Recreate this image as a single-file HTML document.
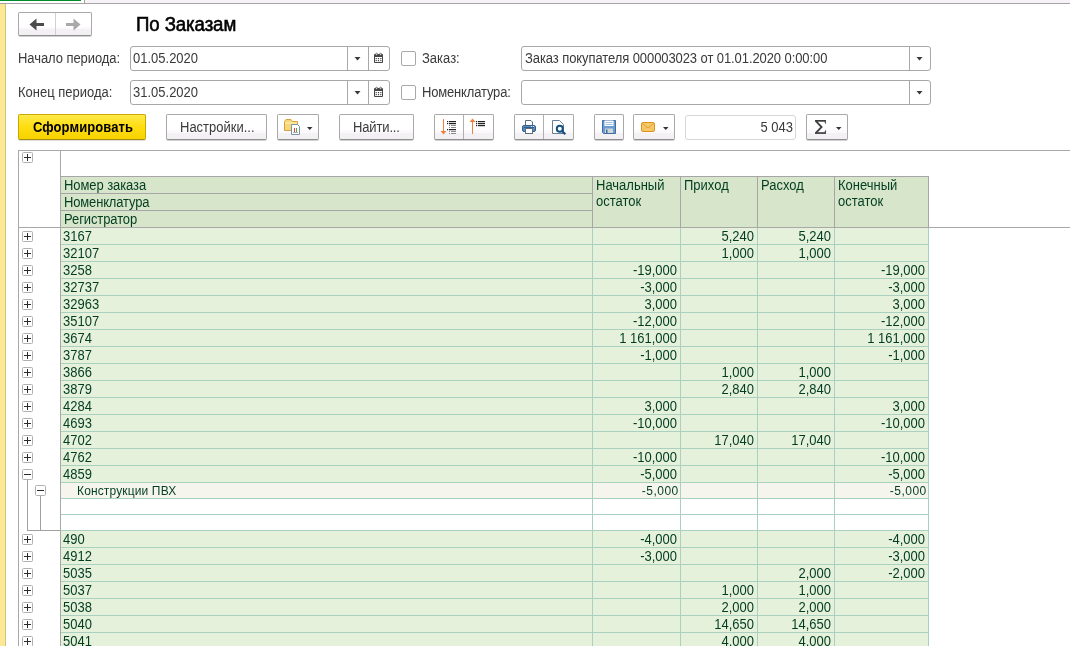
<!DOCTYPE html>
<html><head><meta charset="utf-8">
<style>
*{box-sizing:border-box;margin:0;padding:0}
html,body{width:1070px;height:646px;overflow:hidden;background:#fff}
.lbl,.dt,.ht{will-change:transform}
body{position:relative;font-family:"Liberation Sans",sans-serif;font-size:13px;color:#3a3a3a}
.a{position:absolute}
.btn{position:absolute;border:1px solid #a9a9a9;border-bottom-color:#8e8e8e;border-radius:2px;background:linear-gradient(#fff 0%,#fff 62%,#fbf9fb 62%,#fbf9fb 74%,#f3f1f4 74%,#f3f1f4 100%);box-shadow:0 1px 0 rgba(0,0,0,0.18)}
.inp{position:absolute;border:1px solid #a8a8a8;border-radius:3px;background:#fff}
.lbl{position:absolute;white-space:nowrap;line-height:17px;transform:scaleY(1.1);transform-origin:0 13px}
.tri{position:absolute;width:0;height:0;border-left:3.5px solid transparent;border-right:3.5px solid transparent;border-top:4px solid #3c3c3c}
.tb{position:absolute;width:11px;height:11px;border:1px solid #b0b0b0;border-radius:1.5px;background:#fff}
.dt{position:absolute;white-space:nowrap;line-height:17px;color:#023d20;transform:scaleY(1.1);transform-origin:0 13px}
.dr{text-align:right}
.ht{position:absolute;white-space:nowrap;line-height:17px;color:#023d20;transform:scaleY(1.1);transform-origin:0 13px}
.cb{position:absolute;width:15px;height:15px;border:1px solid #a9a9a9;border-radius:2px;background:#fff}
</style></head>
<body>
<!-- top strip -->
<div class="a" style="left:0;top:0;width:81px;height:1px;background:#008a2e"></div>
<div class="a" style="left:85px;top:0;width:985px;height:3px;background:#f6f2f6"></div>
<div class="a" style="left:84px;top:0;width:1px;height:3px;background:#a6a3a8"></div>
<div class="a" style="left:0;top:3px;width:1070px;height:1px;background:#a6a3a8"></div>
<div class="a" style="left:0;top:4px;width:5px;height:642px;background:#fde995"></div>
<div class="a" style="left:5px;top:4px;width:1px;height:642px;background:#d4c27e"></div>

<!-- nav -->
<div class="btn" style="left:18px;top:12px;width:74px;height:24px"></div>
<div class="a" style="left:55px;top:13px;width:1px;height:22px;background:#d0d0d0"></div>

<div class="a" style="left:136px;top:12px;font-size:18.67px;line-height:25px;color:#000;white-space:nowrap;-webkit-text-stroke:0.55px #000;letter-spacing:-0.1px;transform:scaleY(1.07);transform-origin:0 19px;will-change:transform">По Заказам</div>

<!-- row 1 -->
<div class="lbl" style="left:18px;top:50px;letter-spacing:-0.07px">Начало периода:</div>
<div class="inp" style="left:130px;top:46px;width:260px;height:25px"></div>
<div class="lbl" style="left:133px;top:50px">01.05.2020</div>


<div class="lbl" style="left:18px;top:84px">Конец периода:</div>
<div class="inp" style="left:130px;top:80px;width:260px;height:25px"></div>
<div class="lbl" style="left:133px;top:84px">31.05.2020</div>

<div class="cb" style="left:401px;top:51px"></div>
<div class="lbl" style="left:422px;top:50px">Заказ:</div>
<div class="cb" style="left:401px;top:85px"></div>
<div class="lbl" style="left:422px;top:84px;letter-spacing:-0.17px">Номенклатура:</div>

<div class="inp" style="left:521px;top:46px;width:410px;height:25px"></div>
<div class="lbl" style="left:525px;top:50px;letter-spacing:-0.085px">Заказ покупателя 000003023 от 01.01.2020 0:00:00</div>
<div class="inp" style="left:521px;top:80px;width:410px;height:25px"></div>

<div class="a" style="left:347px;top:47px;width:1px;height:23px;background:#a8a8a8"></div>
<div class="a" style="left:368px;top:47px;width:1px;height:23px;background:#a8a8a8"></div>
<div class="a" style="left:347px;top:81px;width:1px;height:23px;background:#a8a8a8"></div>
<div class="a" style="left:368px;top:81px;width:1px;height:23px;background:#a8a8a8"></div>
<div class="a" style="left:909px;top:47px;width:1px;height:23px;background:#a8a8a8"></div>
<div class="a" style="left:909px;top:81px;width:1px;height:23px;background:#a8a8a8"></div>
<!-- buttons -->
<div class="a" style="left:18px;top:114px;width:128px;height:26px;border:1px solid #c9a900;border-bottom-color:#a58c0c;border-radius:2px;background:linear-gradient(#ffe94a,#ffdd10 50%,#f7d200);box-shadow:0 1px 0 rgba(0,0,0,0.12)"></div>
<div class="lbl" style="left:32.5px;top:119px;font-weight:bold;color:#000;letter-spacing:0.08px">Сформировать</div>

<div class="btn" style="left:166px;top:114px;width:101px;height:26px"></div>
<div class="lbl" style="left:180px;top:119px">Настройки...</div>
<div class="btn" style="left:277px;top:114px;width:42px;height:26px"></div>
<div class="btn" style="left:339px;top:114px;width:75px;height:26px"></div>
<div class="lbl" style="left:353px;top:119px;letter-spacing:-0.14px">Найти...</div>
<div class="btn" style="left:434px;top:114px;width:60px;height:26px"></div>
<div class="btn" style="left:514px;top:114px;width:60px;height:26px"></div>
<div class="a" style="left:463px;top:115px;width:1px;height:24px;background:#b0b0b0"></div>
<div class="a" style="left:543px;top:115px;width:1px;height:24px;background:#b0b0b0"></div>
<div class="btn" style="left:594px;top:114px;width:30px;height:26px"></div>
<div class="btn" style="left:633px;top:114px;width:42px;height:26px"></div>
<div class="inp" style="left:685px;top:115px;width:111px;height:25px;border-color:#d6d6d6"></div>
<div class="lbl" style="left:700px;top:119px;width:93px;text-align:right">5 043</div>
<div class="btn" style="left:806px;top:114px;width:42px;height:26px"></div>

<!-- table -->
<div class="a" style="left:18px;top:150px;width:1052px;height:1px;background:#a8a8a8"></div>
<div class="a" style="left:18px;top:150px;width:1px;height:496px;background:#a8a8a8"></div>
<div class="a" style="left:60px;top:150px;width:1px;height:496px;background:#a8a8a8"></div>
<div class="a" style="left:18px;top:227px;width:1052px;height:1px;background:#a8a8a8"></div>

<div class="a" style="left:61px;top:228px;width:867px;height:16px;background:#e6f1dc"></div>
<div class="a" style="left:61px;top:244px;width:867px;height:1px;background:#aad0bf"></div>
<div class="dt" style="left:63px;top:228px">3167</div>
<div class="dt dr" style="left:680px;width:74px;top:228px">5,240</div>
<div class="dt dr" style="left:757px;width:74px;top:228px">5,240</div>
<div class="a" style="left:61px;top:245px;width:867px;height:16px;background:#e6f1dc"></div>
<div class="a" style="left:61px;top:261px;width:867px;height:1px;background:#aad0bf"></div>
<div class="dt" style="left:63px;top:245px">32107</div>
<div class="dt dr" style="left:680px;width:74px;top:245px">1,000</div>
<div class="dt dr" style="left:757px;width:74px;top:245px">1,000</div>
<div class="a" style="left:61px;top:262px;width:867px;height:16px;background:#e6f1dc"></div>
<div class="a" style="left:61px;top:278px;width:867px;height:1px;background:#aad0bf"></div>
<div class="dt" style="left:63px;top:262px">3258</div>
<div class="dt dr" style="left:592px;width:85px;top:262px">-19,000</div>
<div class="dt dr" style="left:834px;width:91px;top:262px">-19,000</div>
<div class="a" style="left:61px;top:279px;width:867px;height:16px;background:#e6f1dc"></div>
<div class="a" style="left:61px;top:295px;width:867px;height:1px;background:#aad0bf"></div>
<div class="dt" style="left:63px;top:279px">32737</div>
<div class="dt dr" style="left:592px;width:85px;top:279px">-3,000</div>
<div class="dt dr" style="left:834px;width:91px;top:279px">-3,000</div>
<div class="a" style="left:61px;top:296px;width:867px;height:16px;background:#e6f1dc"></div>
<div class="a" style="left:61px;top:312px;width:867px;height:1px;background:#aad0bf"></div>
<div class="dt" style="left:63px;top:296px">32963</div>
<div class="dt dr" style="left:592px;width:85px;top:296px">3,000</div>
<div class="dt dr" style="left:834px;width:91px;top:296px">3,000</div>
<div class="a" style="left:61px;top:313px;width:867px;height:16px;background:#e6f1dc"></div>
<div class="a" style="left:61px;top:329px;width:867px;height:1px;background:#aad0bf"></div>
<div class="dt" style="left:63px;top:313px">35107</div>
<div class="dt dr" style="left:592px;width:85px;top:313px">-12,000</div>
<div class="dt dr" style="left:834px;width:91px;top:313px">-12,000</div>
<div class="a" style="left:61px;top:330px;width:867px;height:16px;background:#e6f1dc"></div>
<div class="a" style="left:61px;top:346px;width:867px;height:1px;background:#aad0bf"></div>
<div class="dt" style="left:63px;top:330px">3674</div>
<div class="dt dr" style="left:592px;width:85px;top:330px">1 161,000</div>
<div class="dt dr" style="left:834px;width:91px;top:330px">1 161,000</div>
<div class="a" style="left:61px;top:347px;width:867px;height:16px;background:#e6f1dc"></div>
<div class="a" style="left:61px;top:363px;width:867px;height:1px;background:#aad0bf"></div>
<div class="dt" style="left:63px;top:347px">3787</div>
<div class="dt dr" style="left:592px;width:85px;top:347px">-1,000</div>
<div class="dt dr" style="left:834px;width:91px;top:347px">-1,000</div>
<div class="a" style="left:61px;top:364px;width:867px;height:16px;background:#e6f1dc"></div>
<div class="a" style="left:61px;top:380px;width:867px;height:1px;background:#aad0bf"></div>
<div class="dt" style="left:63px;top:364px">3866</div>
<div class="dt dr" style="left:680px;width:74px;top:364px">1,000</div>
<div class="dt dr" style="left:757px;width:74px;top:364px">1,000</div>
<div class="a" style="left:61px;top:381px;width:867px;height:16px;background:#e6f1dc"></div>
<div class="a" style="left:61px;top:397px;width:867px;height:1px;background:#aad0bf"></div>
<div class="dt" style="left:63px;top:381px">3879</div>
<div class="dt dr" style="left:680px;width:74px;top:381px">2,840</div>
<div class="dt dr" style="left:757px;width:74px;top:381px">2,840</div>
<div class="a" style="left:61px;top:398px;width:867px;height:16px;background:#e6f1dc"></div>
<div class="a" style="left:61px;top:414px;width:867px;height:1px;background:#aad0bf"></div>
<div class="dt" style="left:63px;top:398px">4284</div>
<div class="dt dr" style="left:592px;width:85px;top:398px">3,000</div>
<div class="dt dr" style="left:834px;width:91px;top:398px">3,000</div>
<div class="a" style="left:61px;top:415px;width:867px;height:16px;background:#e6f1dc"></div>
<div class="a" style="left:61px;top:431px;width:867px;height:1px;background:#aad0bf"></div>
<div class="dt" style="left:63px;top:415px">4693</div>
<div class="dt dr" style="left:592px;width:85px;top:415px">-10,000</div>
<div class="dt dr" style="left:834px;width:91px;top:415px">-10,000</div>
<div class="a" style="left:61px;top:432px;width:867px;height:16px;background:#e6f1dc"></div>
<div class="a" style="left:61px;top:448px;width:867px;height:1px;background:#aad0bf"></div>
<div class="dt" style="left:63px;top:432px">4702</div>
<div class="dt dr" style="left:680px;width:74px;top:432px">17,040</div>
<div class="dt dr" style="left:757px;width:74px;top:432px">17,040</div>
<div class="a" style="left:61px;top:449px;width:867px;height:16px;background:#e6f1dc"></div>
<div class="a" style="left:61px;top:465px;width:867px;height:1px;background:#aad0bf"></div>
<div class="dt" style="left:63px;top:449px">4762</div>
<div class="dt dr" style="left:592px;width:85px;top:449px">-10,000</div>
<div class="dt dr" style="left:834px;width:91px;top:449px">-10,000</div>
<div class="a" style="left:61px;top:466px;width:867px;height:16px;background:#e6f1dc"></div>
<div class="a" style="left:61px;top:482px;width:867px;height:1px;background:#aad0bf"></div>
<div class="dt" style="left:63px;top:466px">4859</div>
<div class="dt dr" style="left:592px;width:85px;top:466px">-5,000</div>
<div class="dt dr" style="left:834px;width:91px;top:466px">-5,000</div>
<div class="a" style="left:61px;top:483px;width:867px;height:15px;background:#f5f5ee"></div>
<div class="a" style="left:61px;top:498px;width:867px;height:1px;background:#aad0bf"></div>
<div class="dt" style="left:77px;top:483px;font-size:12px;transform:none;letter-spacing:0.14px">Конструкции ПВХ</div>
<div class="dt dr" style="left:592px;width:86.8px;top:483px;font-size:12px;transform:none;letter-spacing:0.5px">-5,000</div>
<div class="dt dr" style="left:834px;width:92.8px;top:483px;font-size:12px;transform:none;letter-spacing:0.5px">-5,000</div>
<div class="a" style="left:61px;top:499px;width:867px;height:15px;background:#ffffff"></div>
<div class="a" style="left:61px;top:514px;width:867px;height:1px;background:#aad0bf"></div>
<div class="a" style="left:61px;top:515px;width:867px;height:15px;background:#ffffff"></div>
<div class="a" style="left:61px;top:530px;width:867px;height:1px;background:#aad0bf"></div>
<div class="a" style="left:61px;top:531px;width:867px;height:16px;background:#e6f1dc"></div>
<div class="a" style="left:61px;top:547px;width:867px;height:1px;background:#aad0bf"></div>
<div class="dt" style="left:63px;top:531px">490</div>
<div class="dt dr" style="left:592px;width:85px;top:531px">-4,000</div>
<div class="dt dr" style="left:834px;width:91px;top:531px">-4,000</div>
<div class="a" style="left:61px;top:548px;width:867px;height:16px;background:#e6f1dc"></div>
<div class="a" style="left:61px;top:564px;width:867px;height:1px;background:#aad0bf"></div>
<div class="dt" style="left:63px;top:548px">4912</div>
<div class="dt dr" style="left:592px;width:85px;top:548px">-3,000</div>
<div class="dt dr" style="left:834px;width:91px;top:548px">-3,000</div>
<div class="a" style="left:61px;top:565px;width:867px;height:16px;background:#e6f1dc"></div>
<div class="a" style="left:61px;top:581px;width:867px;height:1px;background:#aad0bf"></div>
<div class="dt" style="left:63px;top:565px">5035</div>
<div class="dt dr" style="left:757px;width:74px;top:565px">2,000</div>
<div class="dt dr" style="left:834px;width:91px;top:565px">-2,000</div>
<div class="a" style="left:61px;top:582px;width:867px;height:16px;background:#e6f1dc"></div>
<div class="a" style="left:61px;top:598px;width:867px;height:1px;background:#aad0bf"></div>
<div class="dt" style="left:63px;top:582px">5037</div>
<div class="dt dr" style="left:680px;width:74px;top:582px">1,000</div>
<div class="dt dr" style="left:757px;width:74px;top:582px">1,000</div>
<div class="a" style="left:61px;top:599px;width:867px;height:16px;background:#e6f1dc"></div>
<div class="a" style="left:61px;top:615px;width:867px;height:1px;background:#aad0bf"></div>
<div class="dt" style="left:63px;top:599px">5038</div>
<div class="dt dr" style="left:680px;width:74px;top:599px">2,000</div>
<div class="dt dr" style="left:757px;width:74px;top:599px">2,000</div>
<div class="a" style="left:61px;top:616px;width:867px;height:16px;background:#e6f1dc"></div>
<div class="a" style="left:61px;top:632px;width:867px;height:1px;background:#aad0bf"></div>
<div class="dt" style="left:63px;top:616px">5040</div>
<div class="dt dr" style="left:680px;width:74px;top:616px">14,650</div>
<div class="dt dr" style="left:757px;width:74px;top:616px">14,650</div>
<div class="a" style="left:61px;top:633px;width:867px;height:16px;background:#e6f1dc"></div>
<div class="a" style="left:61px;top:649px;width:867px;height:1px;background:#aad0bf"></div>
<div class="dt" style="left:63px;top:633px">5041</div>
<div class="dt dr" style="left:680px;width:74px;top:633px">4,000</div>
<div class="dt dr" style="left:757px;width:74px;top:633px">4,000</div>
<div class="a" style="left:592px;top:228px;width:1px;height:418px;background:#aad0bf"></div>
<div class="a" style="left:680px;top:228px;width:1px;height:418px;background:#aad0bf"></div>
<div class="a" style="left:757px;top:228px;width:1px;height:418px;background:#aad0bf"></div>
<div class="a" style="left:834px;top:228px;width:1px;height:418px;background:#aad0bf"></div>
<div class="a" style="left:928px;top:228px;width:1px;height:418px;background:#aad0bf"></div>
<div class="a" style="left:61px;top:177px;width:867px;height:50px;background:#d7e6cb"></div>
<div class="a" style="left:60px;top:176px;width:869px;height:1px;background:#a8a5a8"></div>
<div class="a" style="left:61px;top:193px;width:531px;height:1px;background:#a8a5a8"></div>
<div class="a" style="left:61px;top:210px;width:531px;height:1px;background:#a8a5a8"></div>
<div class="a" style="left:592px;top:176px;width:1px;height:51px;background:#a8a5a8"></div>
<div class="a" style="left:680px;top:176px;width:1px;height:51px;background:#a8a5a8"></div>
<div class="a" style="left:757px;top:176px;width:1px;height:51px;background:#a8a5a8"></div>
<div class="a" style="left:834px;top:176px;width:1px;height:51px;background:#a8a5a8"></div>
<div class="a" style="left:928px;top:176px;width:1px;height:51px;background:#a8a5a8"></div>
<div class="ht" style="left:64px;top:177px;letter-spacing:-0.08px">Номер заказа</div>
<div class="ht" style="left:64px;top:194px;letter-spacing:-0.16px">Номенклатура</div>
<div class="ht" style="left:64px;top:211px;letter-spacing:-0.1px">Регистратор</div>
<div class="ht" style="left:596px;top:177px">Начальный</div>
<div class="ht" style="left:596px;top:193px">остаток</div>
<div class="ht" style="left:684px;top:177px">Приход</div>
<div class="ht" style="left:761px;top:177px">Расход</div>
<div class="ht" style="left:838px;top:177px">Конечный</div>
<div class="ht" style="left:838px;top:193px">остаток</div>
<div class="tb" style="left:22px;top:231px"></div>
<div class="a" style="left:24px;top:236px;width:7px;height:1px;background:#2b2b2b"></div>
<div class="a" style="left:27px;top:233px;width:1px;height:7px;background:#2b2b2b"></div>
<div class="tb" style="left:22px;top:248px"></div>
<div class="a" style="left:24px;top:253px;width:7px;height:1px;background:#2b2b2b"></div>
<div class="a" style="left:27px;top:250px;width:1px;height:7px;background:#2b2b2b"></div>
<div class="tb" style="left:22px;top:265px"></div>
<div class="a" style="left:24px;top:270px;width:7px;height:1px;background:#2b2b2b"></div>
<div class="a" style="left:27px;top:267px;width:1px;height:7px;background:#2b2b2b"></div>
<div class="tb" style="left:22px;top:282px"></div>
<div class="a" style="left:24px;top:287px;width:7px;height:1px;background:#2b2b2b"></div>
<div class="a" style="left:27px;top:284px;width:1px;height:7px;background:#2b2b2b"></div>
<div class="tb" style="left:22px;top:299px"></div>
<div class="a" style="left:24px;top:304px;width:7px;height:1px;background:#2b2b2b"></div>
<div class="a" style="left:27px;top:301px;width:1px;height:7px;background:#2b2b2b"></div>
<div class="tb" style="left:22px;top:316px"></div>
<div class="a" style="left:24px;top:321px;width:7px;height:1px;background:#2b2b2b"></div>
<div class="a" style="left:27px;top:318px;width:1px;height:7px;background:#2b2b2b"></div>
<div class="tb" style="left:22px;top:333px"></div>
<div class="a" style="left:24px;top:338px;width:7px;height:1px;background:#2b2b2b"></div>
<div class="a" style="left:27px;top:335px;width:1px;height:7px;background:#2b2b2b"></div>
<div class="tb" style="left:22px;top:350px"></div>
<div class="a" style="left:24px;top:355px;width:7px;height:1px;background:#2b2b2b"></div>
<div class="a" style="left:27px;top:352px;width:1px;height:7px;background:#2b2b2b"></div>
<div class="tb" style="left:22px;top:367px"></div>
<div class="a" style="left:24px;top:372px;width:7px;height:1px;background:#2b2b2b"></div>
<div class="a" style="left:27px;top:369px;width:1px;height:7px;background:#2b2b2b"></div>
<div class="tb" style="left:22px;top:384px"></div>
<div class="a" style="left:24px;top:389px;width:7px;height:1px;background:#2b2b2b"></div>
<div class="a" style="left:27px;top:386px;width:1px;height:7px;background:#2b2b2b"></div>
<div class="tb" style="left:22px;top:401px"></div>
<div class="a" style="left:24px;top:406px;width:7px;height:1px;background:#2b2b2b"></div>
<div class="a" style="left:27px;top:403px;width:1px;height:7px;background:#2b2b2b"></div>
<div class="tb" style="left:22px;top:418px"></div>
<div class="a" style="left:24px;top:423px;width:7px;height:1px;background:#2b2b2b"></div>
<div class="a" style="left:27px;top:420px;width:1px;height:7px;background:#2b2b2b"></div>
<div class="tb" style="left:22px;top:435px"></div>
<div class="a" style="left:24px;top:440px;width:7px;height:1px;background:#2b2b2b"></div>
<div class="a" style="left:27px;top:437px;width:1px;height:7px;background:#2b2b2b"></div>
<div class="tb" style="left:22px;top:452px"></div>
<div class="a" style="left:24px;top:457px;width:7px;height:1px;background:#2b2b2b"></div>
<div class="a" style="left:27px;top:454px;width:1px;height:7px;background:#2b2b2b"></div>
<div class="tb" style="left:22px;top:469px"></div>
<div class="a" style="left:24px;top:474px;width:7px;height:1px;background:#2b2b2b"></div>
<div class="tb" style="left:35px;top:485px"></div>
<div class="a" style="left:37px;top:490px;width:7px;height:1px;background:#2b2b2b"></div>
<div class="tb" style="left:22px;top:534px"></div>
<div class="a" style="left:24px;top:539px;width:7px;height:1px;background:#2b2b2b"></div>
<div class="a" style="left:27px;top:536px;width:1px;height:7px;background:#2b2b2b"></div>
<div class="tb" style="left:22px;top:551px"></div>
<div class="a" style="left:24px;top:556px;width:7px;height:1px;background:#2b2b2b"></div>
<div class="a" style="left:27px;top:553px;width:1px;height:7px;background:#2b2b2b"></div>
<div class="tb" style="left:22px;top:568px"></div>
<div class="a" style="left:24px;top:573px;width:7px;height:1px;background:#2b2b2b"></div>
<div class="a" style="left:27px;top:570px;width:1px;height:7px;background:#2b2b2b"></div>
<div class="tb" style="left:22px;top:585px"></div>
<div class="a" style="left:24px;top:590px;width:7px;height:1px;background:#2b2b2b"></div>
<div class="a" style="left:27px;top:587px;width:1px;height:7px;background:#2b2b2b"></div>
<div class="tb" style="left:22px;top:602px"></div>
<div class="a" style="left:24px;top:607px;width:7px;height:1px;background:#2b2b2b"></div>
<div class="a" style="left:27px;top:604px;width:1px;height:7px;background:#2b2b2b"></div>
<div class="tb" style="left:22px;top:619px"></div>
<div class="a" style="left:24px;top:624px;width:7px;height:1px;background:#2b2b2b"></div>
<div class="a" style="left:27px;top:621px;width:1px;height:7px;background:#2b2b2b"></div>
<div class="tb" style="left:22px;top:636px"></div>
<div class="a" style="left:24px;top:641px;width:7px;height:1px;background:#2b2b2b"></div>
<div class="a" style="left:27px;top:638px;width:1px;height:7px;background:#2b2b2b"></div>
<div class="a" style="left:27px;top:480px;width:1px;height:50px;background:#a0a0a0"></div>
<div class="a" style="left:40px;top:496px;width:1px;height:34px;background:#a0a0a0"></div>
<div class="a" style="left:27px;top:530px;width:33px;height:1px;background:#a0a0a0"></div>
<div class="tb" style="left:22px;top:152px"></div>
<div class="a" style="left:24px;top:157px;width:7px;height:1px;background:#2b2b2b"></div>
<div class="a" style="left:27px;top:154px;width:1px;height:7px;background:#2b2b2b"></div>
<svg class="a" style="left:0;top:0" width="1070" height="646">
<!-- nav arrows -->
<polygon points="29.5,24.5 36.5,18.5 36.5,30.5" fill="#4b4b4b"/>
<rect x="36" y="23" width="8" height="3" fill="#4b4b4b"/>
<rect x="66" y="23" width="8" height="3" fill="#a9a9a9"/>
<polygon points="80.5,24.5 73.5,18.5 73.5,30.5" fill="#a9a9a9"/>
<!-- dropdown triangles -->
<polygon points="354.5,57 360.5,57 357.5,60.5" fill="#3a3a3a"/>
<polygon points="354.5,91 360.5,91 357.5,94.5" fill="#3a3a3a"/>
<polygon points="916.5,57 922.5,57 919.5,60.5" fill="#3a3a3a"/>
<polygon points="916.5,91 922.5,91 919.5,94.5" fill="#3a3a3a"/>
<!-- calendars -->
<g id="cal">
<rect x="374" y="54" width="9" height="9" rx="1" fill="#454545"/>
<rect x="375" y="57" width="7" height="5" fill="#fff"/>
<rect x="375.6" y="58" width="1.2" height="1.2" fill="#454545"/><rect x="377.9" y="58" width="1.2" height="1.2" fill="#454545"/><rect x="380.2" y="58" width="1.2" height="1.2" fill="#454545"/>
<rect x="375.6" y="60" width="1.2" height="1.2" fill="#454545"/><rect x="377.9" y="60" width="1.2" height="1.2" fill="#454545"/><rect x="380.2" y="60" width="1.2" height="1.2" fill="#454545"/>
<circle cx="376.6" cy="54.2" r="1" fill="#fff" stroke="#454545" stroke-width="0.7"/>
<circle cx="380.6" cy="54.2" r="1" fill="#fff" stroke="#454545" stroke-width="0.7"/>
</g>
<use href="#cal" x="0" y="34"/>
<!-- folder w/ report -->
<path d="M284.5,121.5 L286,119.5 L291,119.5 L292.5,121.5 L297.5,121.5 L297.5,130.5 L284.5,130.5 Z" fill="#f7d77a" stroke="#d9a13a" stroke-width="1"/>
<rect x="285" y="122" width="12" height="2" fill="#fbe79a"/>
<path d="M291.5,124.5 L297.5,124.5 L299.5,126.5 L299.5,134.5 L291.5,134.5 Z" fill="#fff" stroke="#7b93a6" stroke-width="1"/>
<rect x="294" y="128" width="1" height="4" fill="#e83a3a"/>
<rect x="296" y="128" width="1" height="4" fill="#40b040"/>
<rect x="293" y="132" width="5" height="0.8" fill="#999"/>
<polygon points="307,127 312.5,127 309.75,130" fill="#333"/>
<!-- sort desc -->
<rect x="443" y="119" width="1" height="12" fill="#f0823e"/>
<polygon points="440.5,131 446.5,131 443.5,134.5" fill="#f0823e"/>
<g fill="#222"><rect x="447" y="121" width="1.2" height="1.2"/><rect x="449" y="121" width="7" height="1.2"/>
<rect x="447" y="123" width="1.2" height="1.2"/><rect x="449" y="123" width="7" height="1.2"/>
<rect x="447" y="129" width="1.2" height="1.2"/><rect x="449" y="129" width="7" height="1.2"/></g>
<g fill="#8a8a8a"><rect x="449" y="125" width="1" height="1"/><rect x="451" y="125" width="5" height="1"/>
<rect x="449" y="127" width="1" height="1"/><rect x="451" y="127" width="5" height="1"/>
<rect x="449" y="131" width="1" height="1"/><rect x="451" y="131" width="5" height="1"/>
<rect x="449" y="133" width="1" height="1"/><rect x="451" y="133" width="5" height="1"/></g>
<!-- sort asc -->
<rect x="472" y="122" width="1" height="12" fill="#f0823e"/>
<polygon points="469.5,122 475.5,122 472.5,118.5" fill="#f0823e"/>
<g fill="#222"><rect x="476" y="121" width="1.2" height="1.2"/><rect x="478" y="121" width="7" height="1.2"/>
<rect x="476" y="123" width="1.2" height="1.2"/><rect x="478" y="123" width="7" height="1.2"/>
<rect x="476" y="125" width="1.2" height="1.2"/><rect x="478" y="125" width="7" height="1.2"/></g>
<!-- printer -->
<path d="M525.5,120.5 L531,120.5 L532.5,122 L532.5,126 L525.5,126 Z" fill="#fff" stroke="#5a6e80" stroke-width="1"/>
<rect x="522.5" y="125.5" width="13" height="6" rx="1.5" fill="#5d8cbd" stroke="#2f5f8e" stroke-width="1"/>
<rect x="524" y="127" width="10" height="1" fill="#2f5f8e"/>
<rect x="531" y="126" width="1" height="1" fill="#e8f0f8"/><rect x="533" y="126" width="1" height="1" fill="#e8f0f8"/>
<rect x="525.5" y="128.5" width="7" height="5" fill="#fff" stroke="#5a6e80" stroke-width="1"/>
<!-- preview -->
<path d="M552.5,120.5 L559.5,120.5 L563.5,124.5 L563.5,133.5 L552.5,133.5 Z" fill="#fff" stroke="#687e92" stroke-width="1"/>
<circle cx="559.8" cy="128.8" r="3" fill="#fff" stroke="#15507f" stroke-width="2"/>
<line x1="562.2" y1="131.2" x2="565.3" y2="134.3" stroke="#15507f" stroke-width="2.2"/>
<!-- floppy -->
<path d="M602.5,120.5 L615.5,120.5 L615.5,133.5 L603.5,133.5 L602.5,132.5 Z" fill="#6d9bd2" stroke="#3f6ca3" stroke-width="1"/>
<rect x="604.5" y="120.5" width="9" height="5.5" fill="#fff"/>
<rect x="605.5" y="122" width="7" height="0.8" fill="#8aaed6"/>
<rect x="605.5" y="124" width="7" height="0.8" fill="#8aaed6"/>
<rect x="605" y="128.5" width="8" height="4.5" fill="#cfd8d8"/>
<rect x="606" y="129.5" width="1.5" height="3.5" fill="#3f6ca3"/>
<!-- envelope -->
<rect x="641.5" y="122.5" width="13" height="9" rx="1.5" fill="#f6c867" stroke="#d9951f" stroke-width="1"/>
<polyline points="642.5,123.5 648,128 653.5,123.5" fill="none" stroke="#d9951f" stroke-width="0.8"/>
<polyline points="642.5,131 646,127.2" fill="none" stroke="#e8b050" stroke-width="0.6"/>
<polyline points="653.5,131 650,127.2" fill="none" stroke="#e8b050" stroke-width="0.6"/>
<polygon points="663,127 668.5,127 665.75,130" fill="#333"/>
<!-- sigma -->
<g fill="#3d3d3d">
<rect x="815" y="120" width="11" height="1.7"/>
<rect x="815" y="132.2" width="11" height="1.7"/>
<polygon points="824.2,121.5 826,121.5 826,124.2"/>
<polygon points="826,129.8 826,132.4 824.2,132.4"/>
</g>
<polyline points="815.9,121.2 821.6,127 815.9,132.8" fill="none" stroke="#3d3d3d" stroke-width="1.8"/>
<polygon points="836,127 841.5,127 838.75,130" fill="#333"/>
</svg>

</body></html>
